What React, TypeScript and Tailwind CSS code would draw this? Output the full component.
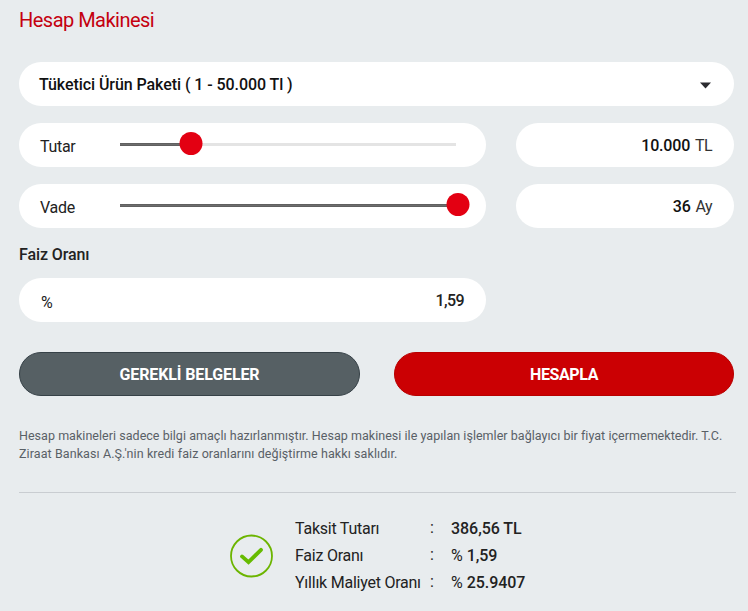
import React, { useState } from 'react';

interface SliderRowProps {
  label: string;
  value: number;
  min: number;
  max: number;
  unit: string;
  onChange: (value: number) => void;
}

const formatNumber = (n: number) => n.toString().replace(/\B(?=(\d{3})+(?!\d))/g, '.');

const SliderRow: React.FC<SliderRowProps> = ({ label, value, min, max, unit, onChange }) => {
    // the thumb sits slightly ahead of the filled part of the track
    const ratio = (value - min) / (max - min);
    const position = `calc(${ratio * 100}% + ${ratio < 1 ? 4 : 2}px)`;

    return (
        <div className="flex gap-[30px]">
            <div className="flex h-11 w-[467px] items-center rounded-full bg-white pl-[21px] pr-[30px]">
                <label className="w-20 pt-[3px] text-[16px] tracking-[-0.3px] text-[#222]">{label}</label>
                <div className="relative -top-px h-[3px] w-[336px] bg-[#e4e4e4]">
                    <div className="h-full border-y border-[#606060] bg-[#6d6d6d]" style={{ width: `${ratio * 100}%` }} />
                    <div
                        className="absolute -top-[11px] size-[23px] -translate-x-1/2 rounded-full bg-[#e30012]"
                        style={{ left: position }}
                    />
                    <input
                        type="range"
                        aria-label={label}
                        min={min}
                        max={max}
                        value={value}
                        onChange={(e) => onChange(Number(e.target.value))}
                        className="absolute -top-[10px] left-0 h-6 w-full cursor-pointer opacity-0"
                    />
                </div>
            </div>
            <div className="flex h-11 w-[218px] items-center justify-end gap-[5px] rounded-full bg-white pr-[22px] pt-0.5 text-[16px] tracking-[-0.2px] text-[#333]">
                <span className="font-medium text-[#111]">{formatNumber(value)}</span>
                <span className="tracking-[-0.6px]">{unit}</span>
            </div>
        </div>
    );
};

export default function App() {
    const [amount, setAmount] = useState(10000);
    const [term, setTerm] = useState(36);

    const results = [
        { label: 'Taksit Tutarı', value: '386,56 TL' },
        { label: 'Faiz Oranı', prefix: '%', value: '1,59' },
        { label: 'Yıllık Maliyet Oranı', prefix: '%', value: '25.9407' },
    ];

    return (
        <div className="h-[611px] w-[748px] overflow-hidden bg-[#e8ecee] pl-[19px] pr-3 font-[Roboto,sans-serif] text-[#222]">
            <h2 className="h-[62px] pt-[5px] text-[20px] leading-[30px] tracking-[-0.52px] text-[#c4000f]">Hesap Makinesi</h2>

            <div className="flex w-[715px] flex-col gap-[17px]">
                <button className="flex h-11 items-center justify-between rounded-full bg-white pl-5 pr-[23px] text-[16px] font-medium text-[#111]">
                    <span className="pt-0.5 tracking-[-0.07px]">Tüketici Ürün Paketi ( 1 - 50.000 Tl )</span>
                    <svg width="11" height="7" viewBox="0 0 11 7" className="mt-0.5">
                        <path d="M0 0.5h11L5.5 6.5z" fill="#2b2b30" />
                    </svg>
                </button>
                <SliderRow label="Tutar" value={amount} min={1} max={50000} unit="TL" onChange={setAmount} />
                <SliderRow label="Vade" value={term} min={1} max={36} unit="Ay" onChange={setTerm} />
            </div>

            <h3 className="h-[50px] pt-[15px] text-[16px] font-medium leading-6 tracking-[-0.1px]">Faiz Oranı</h3>
            <div className="flex h-11 w-[467px] items-center justify-between rounded-full bg-white pl-[22px] pr-[22px] text-[16px]">
                <span className="pt-[5px]">%</span>
                <span className="pt-0.5 font-medium tracking-[-0.6px]">1,59</span>
            </div>

            <div className="mt-[30px] flex w-[715px] gap-[34px]">
                <button className="h-11 w-[341px] rounded-full border border-[#364147] bg-[#566064] pt-0.5 text-[16px] font-bold tracking-[-0.12px] text-white">
                    GEREKLİ BELGELER
                </button>
                <button className="h-11 w-[340px] rounded-full border border-[#b80000] bg-[#cb0003] pt-0.5 text-[16px] font-bold tracking-[-0.4px] text-white">
                    HESAPLA
                </button>
            </div>

            <p className="mt-[31px] whitespace-nowrap text-[12.5px] leading-[18px] tracking-[0.035px] text-[#596066]">
                Hesap makineleri sadece bilgi amaçlı hazırlanmıştır. Hesap makinesi ile yapılan işlemler bağlayıcı bir fiyat içermemektedir. T.C.
                <br />
                <span className="tracking-[0.09px]">Ziraat Bankası A.Ş.'nin kredi faiz oranlarını değiştirme hakkı saklıdır.</span>
            </p>

            <div className="mt-[29px] flex items-center border-t border-[#c9cdd1] pl-[211px] pt-[22px]">
                <svg width="44" height="44" viewBox="0 0 44 44" fill="none" className="mr-[21px] shrink-0">
                    <circle cx="21.5" cy="22" r="20.5" stroke="#6cb500" strokeWidth="1.8" />
                    <path d="M12 22.4l6.5 5.8L31 15.8" stroke="#66bb00" strokeWidth="3.8" strokeLinecap="round" />
                </svg>
                <dl className="text-[16px] leading-[27px]">
                    {results.map((row) => (
                        <div key={row.label} className="flex whitespace-nowrap">
                            <dt className="w-[135px] tracking-[-0.24px]">{row.label}</dt>
                            <span className="-mt-px w-[21px]">:</span>
                            <dd className="font-medium tracking-[-0.05px]">
                                {row.prefix && <span className="mr-1 font-normal">{row.prefix}</span>}
                                {row.value}
                            </dd>
                        </div>
                    ))}
                </dl>
            </div>
        </div>
    );
}
